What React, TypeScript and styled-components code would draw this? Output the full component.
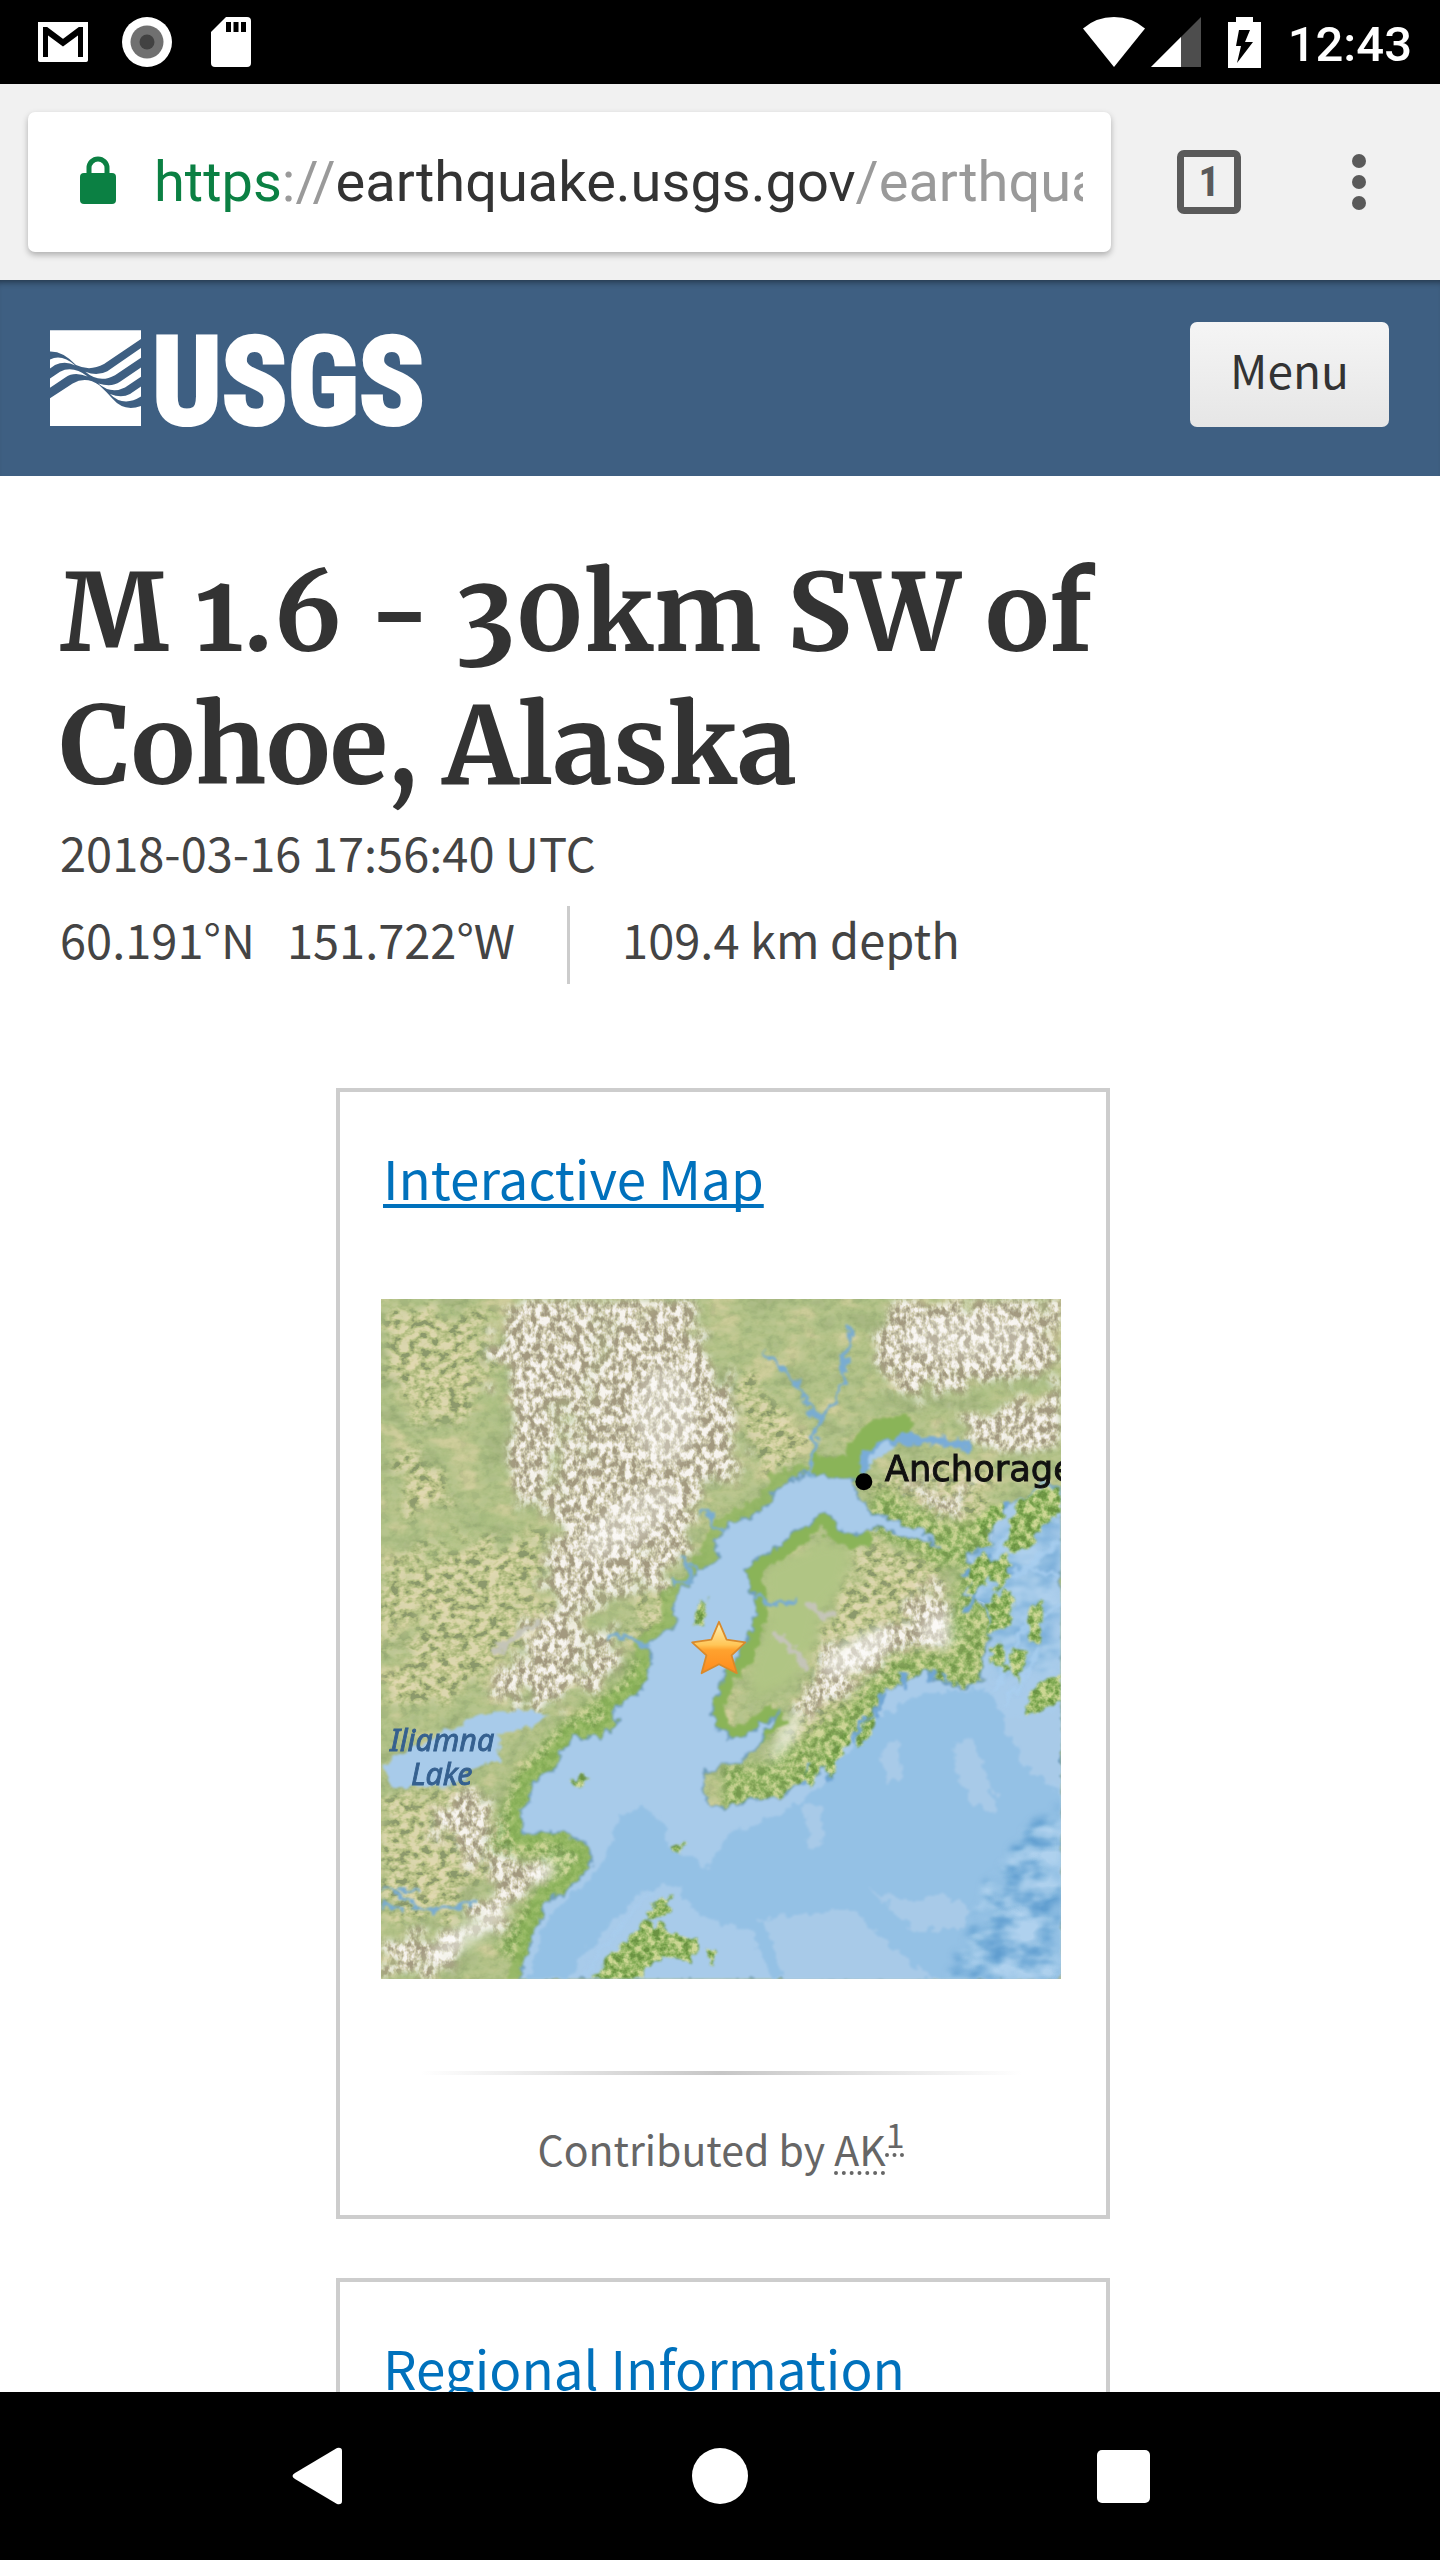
import React from "react";
import styled, { createGlobalStyle } from "styled-components";

const sans = '"Noto Sans CJK SC", "Noto Sans", sans-serif';
const roboto = 'Roboto, "Noto Sans", sans-serif';

const GlobalStyle = createGlobalStyle`
  * { box-sizing: border-box; }
  body { margin: 0; background: #fff; color: #333; font-family: ${sans}; }
  button { border: 0; padding: 0; background: none; font: inherit; color: inherit; cursor: pointer; }
`;

const Screen = styled.div`
  display: flex;
  flex-direction: column;
  height: 100vh;
  overflow: hidden;
`;

/* ---------- system bars ---------- */

const StatusBar = styled.header`
  flex: none;
  display: flex;
  align-items: center;
  justify-content: space-between;
  height: 84px;
  padding: 0 28px 0 38px;
  background: #000;
  color: #fff;
`;

const IconGroup = styled.div<{ $gap: number }>`
  display: flex;
  align-items: center;
  gap: ${p => p.$gap}px;
`;

const Clock = styled.time`
  padding-top: 6px;
  font: 500 49px/58px ${roboto};
`;

const NavBar = styled.nav`
  flex: none;
  display: grid;
  grid-template-columns: repeat(3, 28%);
  justify-content: center;
  height: 168px;
  background: #000;
`;

const NavButton = styled.button`
  display: flex;
  align-items: center;
  justify-content: center;
`;

/* ---------- browser toolbar ---------- */

const Toolbar = styled.div`
  flex: none;
  display: flex;
  align-items: center;
  height: 196px;
  padding: 0 11px 0 28px;
  background: #f1f1f1;
`;

const AddressBar = styled.button`
  flex: 1;
  min-width: 0;
  display: flex;
  align-items: center;
  gap: 38px;
  height: 140px;
  margin-right: 28px;
  padding: 0 28px 0 52px;
  border-radius: 7px;
  background: #fff;
  box-shadow: 0 3px 6px rgba(0, 0, 0, 0.28);
`;

const Url = styled.span`
  flex: 1;
  min-width: 0;
  overflow: hidden;
  white-space: nowrap;
  text-align: left;
  font: 400 56px/66px ${roboto};
  color: #9a9a9a;
`;

const UrlPart = styled.span<{ $color: string }>`
  color: ${p => p.$color};
`;

const ToolButton = styled.button`
  flex: none;
  display: flex;
  align-items: center;
  justify-content: center;
  width: 140px;
  height: 140px;
  margin-right: 10px;
  &:last-child { margin-right: 0; }
`;

const TabCount = styled.span`
  width: 64px;
  height: 64px;
  border: 7px solid #5a5a5a;
  border-radius: 7px;
  font: 700 42px/50px "Roboto Condensed", ${roboto};
  text-align: center;
  color: #5a5a5a;
`;

/* ---------- page ---------- */

const Page = styled.div`
  flex: 1;
  min-height: 0;
  overflow: hidden;
`;

const SiteHeader = styled.div`
  display: flex;
  align-items: flex-start;
  justify-content: space-between;
  height: 196px;
  padding: 42px 51px 0 50px;
  background: #3e5f82;
  box-shadow: inset 0 7px 6px -5px rgba(0, 0, 0, 0.45);
`;

const Logo = styled.a`
  display: flex;
  gap: 11px;
  padding-top: 8px;
  color: #fff;
  text-decoration: none;
`;

const LogoText = styled.span`
  font: 700 122px/106px "Roboto Condensed", "Open Sans Condensed", sans-serif;
  -webkit-text-stroke: 4px #fff;
`;

const MenuButton = styled.button`
  width: 199px;
  height: 105px;
  padding-bottom: 12px;
  border-radius: 7px;
  background: linear-gradient(#f5f5f5, #e6e6e6);
  font-size: 46px;
  color: #333;
`;

const Content = styled.main`
  padding: 71px 54px 0 60px;
`;

const Title = styled.h1`
  margin: 0;
  font: 700 107px/133px Merriweather, "Noto Serif", serif;
  font-variant-numeric: oldstyle-nums;
  font-kerning: none;
  max-width: 1200px;
`;

const EventTime = styled.p`
  margin: 0;
  font-size: 47px;
  line-height: 78px;
  color: #444;
`;

const Facts = styled.div`
  display: flex;
  align-items: flex-start;
  margin: 15px 0 104px;
  font-size: 47px;
  line-height: 66px;
  color: #444;
`;

const Coordinate = styled.span`
  margin-right: 32px;
`;

const Depth = styled.span`
  margin-left: 20px;
  padding: 0 0 12px 52px;
  border-left: 3px solid #ccc;
`;

const Card = styled.section`
  width: 774px;
  max-width: 100%;
  margin: 0 auto 59px;
  padding: 46px 45px 34px 41px;
  border: 4px solid #cdcdcd;
`;

const CardTitle = styled.h2`
  margin: 0 0 83px;
  padding-left: 2px;
  font-size: 53px;
  font-weight: 400;
  line-height: 78px;
`;

const CardLink = styled.a`
  color: #0071bc;
  text-decoration: underline;
  text-decoration-thickness: 4px;
  text-underline-offset: 4px;
  text-decoration-skip-ink: none;
`;

const MapFigure = styled.figure`
  margin: 0;
  svg { display: block; width: 100%; height: auto; }
`;

const Rule = styled.hr`
  height: 4px;
  margin: 92px 39px 40px;
  border: 0;
  background: linear-gradient(to right, transparent, #c6c6c6 50%, transparent);
`;

const Credit = styled.p`
  margin: 0;
  font-size: 41px;
  line-height: 66px;
  text-align: center;
  color: #666;
`;

const Abbr = styled.abbr`
  text-decoration: underline dotted 4px;
  text-underline-offset: 5px;
`;

const Sup = styled.sup`
  position: relative;
  top: -18px;
  vertical-align: baseline;
  font-size: 34px;
  line-height: 0;
  text-decoration: underline dotted 4px;
  text-underline-offset: 5px;
`;

/* ---------- icons ---------- */

const StatusIcons = () => (
  <IconGroup $gap={34}>
    <svg width="50" height="50" viewBox="0 0 50 50" aria-label="Mail">
      <rect y="5" width="50" height="40" rx="4" fill="#fff" />
      <path d="M7.500 40V13.500L25 26.500 42.500 13.500V40" fill="none" stroke="#000" strokeWidth="5" />
      <path d="M5 10L25 25 45 10" fill="none" stroke="#000" strokeWidth="5" />
      <path d="M0 5H50V10H0Z" fill="#fff" />
      <rect y="5" width="5" height="40" rx="2" fill="#fff" />
      <rect x="45" y="5" width="5" height="40" rx="2" fill="#fff" />
    </svg>
    <svg width="50" height="50" viewBox="0 0 50 50" aria-label="Recording">
      <circle cx="25" cy="25" r="25" fill="#fff" />
      <circle cx="25" cy="25" r="16.500" fill="#707070" />
      <circle cx="25" cy="25" r="7.500" fill="#424242" />
    </svg>
    <svg width="50" height="50" viewBox="0 0 50 50" aria-label="SD card">
      <path d="M20 0H41Q45 0 45 4V46Q45 50 41 50H9Q5 50 5 46V15Z" fill="#fff" />
      <path d="M20 5h5v10h-5zM27.500 5h5v10h-5zM35 5h5v10h-5z" fill="#000" />
    </svg>
  </IconGroup>
);

const SignalIcons = () => (
  <>
    <IconGroup $gap={6}>
      <svg width="62" height="50" viewBox="0 0 62 50" aria-label="Wi-Fi">
        <path d="M0 11.500Q13 0 31 0T62 11.500L31 50Z" fill="#fff" />
      </svg>
      <svg width="50" height="50" viewBox="0 0 50 50" aria-label="Signal">
        <path d="M50 0V50H0Z" fill="#4d4d4d" />
        <path d="M30 20V50H0Z" fill="#fff" />
      </svg>
    </IconGroup>
    <svg width="33" height="51" viewBox="0 0 33 51" aria-label="Charging">
      <path d="M8 0H25V5H33V51H0V5H8Z" fill="#fff" />
      <path d="M11 13H22L17 25H25L9 46 13 29H8Z" fill="#000" />
    </svg>
  </>
);

const Lock = () => (
  <svg width="36" height="52" viewBox="0 0 36 52" aria-label="Secure">
    <path d="M9 22V12a9 9 0 0 1 18 0V22" fill="none" stroke="#0b8043" strokeWidth="5" />
    <rect y="17" width="36" height="31" rx="4" fill="#0b8043" />
  </svg>
);

const Waves = () => (
  <svg width="91" height="96" viewBox="30 43 273 287" preserveAspectRatio="none" aria-hidden="true">
    <g fill="#fff">
      <path d="M30 44H303V70L192 145Q150 168 108 148Q70 106 30 107Z" />
      <path d="M30 158L45 148Q75 133 106 149Q65 113 30 131Z" />
      <path d="M136 168Q172 182 202 166L303 97V126L225 178Q178 204 136 168Z" />
      <path d="M30 188L60 168Q98 148 143 182Q103 166 77 184L30 216Z" />
      <path d="M175 203Q215 216 240 198L303 155V183L255 215Q213 236 175 203Z" />
      <path d="M210 234Q245 248 270 234L303 212V242Q250 275 210 234Z" />
      <path d="M30 247L98 203Q138 180 178 208Q202 230 217 248Q252 289 303 270V330H30Z" />
    </g>
  </svg>
);

/* ---------- terrain map ---------- */

const WATER =
  "M1085 425L1040 418 1000 415 985 405 960 420 920 435 895 470 880 495 850 510 810 520 785 545 770 570 785 605 740 625 715 660 680 690 680 720 690 740 665 765 640 780 618 800 632 830 620 870 600 905 555 925 548 970 520 1000 460 1000 430 1035 412 1075 365 1100 355 1140 340 1165 345 1215 385 1205 440 1215 485 1240 500 1272 470 1320 430 1350 395 1365 380 1410 365 1440 355 1480 335 1545H1550V440L1500 430 1470 470 1420 480 1395 520 1390 570 1330 590 1365 620 1330 680 1375 700 1390 760 1370 820 1370 870 1330 892 1280 880 1240 850 1200 880 1150 895 1125 955 1080 995 1040 1045 1000 1085 950 1105 920 1140 850 1140 795 1165 740 1125 750 1080 800 1060 860 1035 885 990 915 945 880 970 850 995 805 1000 765 970 770 920 785 870 815 830 840 790 860 740 860 690 843 625 865 600 900 585 950 545 1000 505 1025 500 1050 540 1090 548 1130 530 1190 548 1245 560 1272 575 1240 540 1165 515 1120 490 1085 455Z";
const INLET_WEST = "M985 405L960 420 920 435 895 470 880 495 850 510 810 520 785 545 770 570 785 605 740 625 715 660 680 690 680 720 690 740 665 765 640 780 618 800 632 830 620 870 600 905 555 925 548 970 520 1000 460 1000 430 1035 412 1075 365 1100 355 1140 340 1165 345 1215 385 1205 440 1215 485 1240 500 1272 470 1320 430 1350 395 1365 380 1410 365 1440 355 1480 335 1545";
const INLET_EAST = "M915 945L880 970 850 995 805 1000 765 970 770 920 785 870 815 830 840 790 860 740 860 690 843 625 865 600 900 585 950 545 1000 505 1025 500 1050 540 1090 548 1110 540";

const SNOW_RANGES = [
  "M300 20H725L740 130 820 220 810 320 840 400 730 440 725 520 700 600 650 660 560 690 470 730 400 830 330 800 430 690 390 600 430 500 330 480 300 400 330 300 280 150Z",
  "M1160 20H1546V205L1380 205 1180 245 1140 150Z",
  "M1290 285L1546 225V345L1450 370 1350 335Z",
  "M1180 435L1330 440 1330 520 1260 500Z",
  "M420 760L540 760 590 830 520 880 400 920 300 920 260 890 320 830Z",
  "M1230 670L1300 680 1310 780 1240 800 1150 830 1030 930 970 960 960 900 1020 840 1040 780 1140 770Z",
  "M130 1170L240 1110 290 1200 320 1260 440 1265 400 1320 330 1370 250 1440 130 1530 25 1541V1460L210 1420 290 1340 200 1260Z",
];
const HILLS = [
  "M25 60L270 40 280 160 200 300 60 260Z",
  "M60 340L160 400 190 480 80 500Z",
  "M180 560L400 560 390 660 120 740 60 720 25 850V600Z",
  "M160 680L430 690 380 770 280 830 150 940 25 920 60 840Z",
  "M820 170L960 300 970 360 860 400Z",
  "M1100 560L1250 580 1300 700 1370 740 1360 860 1200 850 1080 960 930 1100 890 1080 940 960 1000 840 1020 760 1080 640Z",
  "M1090 440L1330 380 1400 420 1360 560 1240 530Z",
  "M25 1130L240 1100 300 1260 180 1400 25 1400Z",
  "M600 700L670 660 650 760 560 760Z",
];
const ISLANDS = [
  "M1546 860L1500 880 1465 930 1470 955 1520 930 1546 915Z",
  "M1440 490L1500 440 1546 440 1546 500 1500 530 1470 580 1430 590 1425 560Z",
  "M1340 620L1375 590 1400 620 1370 670 1340 680Z",
  "M1380 700L1420 665 1445 700 1420 760 1385 770Z",
  "M1385 800L1410 790 1430 850 1395 840Z",
  "M1480 720L1505 690 1495 790 1470 790Z",
  "M1380 620L1425 590 1430 640 1400 670Z",
  "M1440 800L1470 820 1450 870 1430 850Z",
  "M1350 520L1410 470 1420 510 1370 560Z",
  "M1010 1050L1080 980 1060 1040 1025 1090Z",
  "M1090 990L1130 950 1115 1010 1090 1030Z",
  "M960 1090L1010 1050 990 1110Z",
  "M455 1095L475 1085 495 1100 465 1112Z",
  "M740 690L755 690 740 745 720 752Z",
  "M625 1380L675 1355 660 1400 620 1410Z",
  "M500 1541L530 1490 590 1440 620 1410 690 1440 740 1460 720 1500 650 1490 600 1541Z",
  "M670 1245L700 1240 700 1258 680 1255Z",
  "M755 1480L770 1475 765 1510 757 1505Z",
];
const RIVERS = [
  "M985 415L990 370 1000 345 990 320 1010 290 1045 240 1060 210 1065 150 1078 100 1065 75",
  "M1008 290L985 270 975 240 950 200 920 170 880 140",
  "M785 545L765 520 755 495 735 505",
  "M860 680L900 705 940 700 955 685",
  "M680 655L720 655 705 605 740 630",
  "M630 795L600 790 570 770 530 780",
  "M25 1335L80 1360 110 1390 160 1385 240 1370",
  "M25 1370L80 1390M110 1350L60 1340",
];
const STAR = "M781 742L798 782 840 788 809 817 821 857 781 837 742 857 753 817 721 788 764 782Z";

const paths = (list: string[], extra: React.SVGProps<SVGPathElement> = {}) =>
  list.map(d => <path key={d} d={d} {...extra} />);

const Terrain = ({ id, freq, seed, rgb, k }: { id: string; freq: string; seed: number; rgb: string[]; k: number }) => (
  <filter id={id} x="0" y="0" width="100%" height="100%" colorInterpolationFilters="sRGB">
    <feTurbulence type="fractalNoise" baseFrequency={freq} numOctaves={3} seed={seed} />
    <feColorMatrix values={`${k} 0 0 0 ${(1 - k) / 2} ${k} 0 0 0 ${(1 - k) / 2} ${k} 0 0 0 ${(1 - k) / 2} 0 0 0 0 1`} />
    <feComponentTransfer>
      <feFuncR type="table" tableValues={rgb[0]} />
      <feFuncG type="table" tableValues={rgb[1]} />
      <feFuncB type="table" tableValues={rgb[2]} />
    </feComponentTransfer>
    <feGaussianBlur stdDeviation="1.5" />
  </filter>
);

const full = { x: 25, y: 20, width: 1521, height: 1521 };

const TerrainMap = () => (
  <svg viewBox="25 20 1521 1521" role="img" aria-label="Map of the epicenter in Cook Inlet, Alaska">
    <defs>
      <Terrain id="plains" freq="0.012 0.022" seed={4} k={2.2} rgb={[".62 .67 .70 .80", ".70 .75 .76 .80", ".48 .52 .53 .60"]} />
      <Terrain id="hills" freq="0.045 0.06" seed={9} k={2.6} rgb={[".52 .68 .76 .87 .90", ".57 .72 .78 .84 .86", ".40 .48 .56 .66 .72"]} />
      <Terrain id="peaks" freq="0.07 0.05" seed={15} k={2.9} rgb={[".64 .71 .82 .91 .97", ".60 .69 .80 .89 .96", ".50 .60 .68 .85 .94"]} />
      <Terrain id="coastal" freq="0.06" seed={21} k={2.6} rgb={[".42 .52 .66 .80", ".58 .68 .76 .84", ".26 .34 .46 .58"]} />
      <Terrain id="sea" freq="0.012 0.02" seed={2} k={2.4} rgb={[".36 .46 .60 .70", ".61 .68 .77 .83", ".81 .85 .90 .94"]} />
      <filter id="soft" x="-20%" y="-20%" width="140%" height="140%"><feGaussianBlur stdDeviation="12" /></filter>
      <filter id="rough" filterUnits="userSpaceOnUse" {...full}>
        <feTurbulence type="fractalNoise" baseFrequency="0.045" numOctaves={2} seed={7} result="n" />
        <feDisplacementMap in="SourceGraphic" in2="n" scale="34" xChannelSelector="R" yChannelSelector="G" result="d" />
        <feGaussianBlur in="d" stdDeviation="1.8" />
      </filter>
      <filter id="ragged" filterUnits="userSpaceOnUse" {...full}>
        <feTurbulence type="fractalNoise" baseFrequency="0.025" numOctaves={3} seed={3} result="n" />
        <feDisplacementMap in="SourceGraphic" in2="n" scale="130" xChannelSelector="R" yChannelSelector="G" result="d" />
        <feGaussianBlur in="d" stdDeviation="8" />
      </filter>
      <mask id="snowMask" maskUnits="userSpaceOnUse" {...full}><g filter="url(#ragged)">{paths(SNOW_RANGES, { fill: "#fff" })}</g></mask>
      <mask id="hillMask" maskUnits="userSpaceOnUse" {...full}><g filter="url(#ragged)">{paths(HILLS, { fill: "#ccc" })}</g></mask>
      <mask id="coastMask" maskUnits="userSpaceOnUse" {...full}>
        <g filter="url(#soft)" fill="none" stroke="#fff" strokeWidth="90">
          <path d="M632 830L600 905 460 1000 365 1100 320 1220 440 1240 470 1320 380 1400 320 1500" />
          <path d="M1120 480L1280 570 1400 560 1350 720 1350 860 1200 860 1080 980 900 1110 790 1110" strokeWidth="100" />
        </g>
      </mask>
      <mask id="islandMask" maskUnits="userSpaceOnUse" {...full}><g filter="url(#rough)">{paths(ISLANDS, { fill: "#fff" })}</g></mask>
      <mask id="deepMask" maskUnits="userSpaceOnUse" {...full}>
        <g filter="url(#ragged)">
          <path d="M1546 1150L1450 1220 1400 1330 1360 1400 1300 1546H1546Z" fill="#fff" />
          <path d="M1330 600L1546 440V850L1400 860Z" fill="#999" />
        </g>
      </mask>
      <clipPath id="waterClip"><path d={WATER} /></clipPath>
      <linearGradient id="starFill" x1="0" y1="0" x2="0" y2="1">
        <stop offset="0" stopColor="#fff2b8" />
        <stop offset=".45" stopColor="#ffc657" />
        <stop offset=".55" stopColor="#ffa22e" />
        <stop offset="1" stopColor="#ff8a1c" />
      </linearGradient>
    </defs>

    <rect {...full} filter="url(#plains)" />
    <g opacity=".16"><rect {...full} filter="url(#hills)" /></g>
    <g mask="url(#hillMask)"><rect {...full} filter="url(#hills)" /></g>
    <g mask="url(#snowMask)"><rect {...full} filter="url(#peaks)" /></g>
    <g filter="url(#soft)" fill="#fff">
      <ellipse cx="660" cy="280" rx="70" ry="110" opacity=".35" />
      <ellipse cx="580" cy="520" rx="130" ry="50" opacity=".35" transform="rotate(-35 580 520)" />
      <ellipse cx="1090" cy="810" rx="90" ry="35" opacity=".55" transform="rotate(-30 1090 810)" />
      <ellipse cx="930" cy="1010" rx="20" ry="70" opacity=".6" transform="rotate(25 930 1010)" />
      <ellipse cx="1280" cy="760" rx="50" ry="40" opacity=".5" />
      <ellipse cx="1340" cy="110" rx="150" ry="50" opacity=".25" />
      <ellipse cx="410" cy="1290" rx="60" ry="22" opacity=".5" transform="rotate(-30 410 1290)" />
      <ellipse cx="220" cy="1440" rx="110" ry="24" opacity=".5" transform="rotate(-35 220 1440)" />
    </g>
    <g filter="url(#ragged)" fill="none" stroke="#a9bf80" strokeWidth="16" opacity=".75">
      <path d="M25 660L140 600 230 530 380 470 420 400 430 250M280 20L240 180 290 300" />
      <path d="M480 380L490 200 540 60M440 730L620 620M560 690L470 850" strokeWidth="9" />
      <path d="M1140 250L1380 210 1546 215" />
    </g>
    <path d="M880 620L1020 560 1080 580 1060 660 1010 720 990 800 940 880 860 920 850 840 890 740Z" fill="#b0c584" filter="url(#soft)" />
    <path d="M900 770Q950 790 980 850M985 710L1030 730M280 810L370 745" stroke="#c4c4b8" strokeWidth="14" strokeLinecap="round" fill="none" filter="url(#rough)" />
    <g mask="url(#coastMask)" opacity=".8"><rect {...full} filter="url(#coastal)" /></g>

    <g fill="none" stroke="#8ab458" strokeWidth="56" strokeLinejoin="round" filter="url(#rough)">
      <path d={INLET_WEST} opacity=".7" />
      <path d={INLET_EAST} />
      <path d="M990 400H1085L1095 350 1140 315 1210 305" />
    </g>

    <g filter="url(#rough)">
      <path d={WATER} fill="#a8cbea" stroke="#6f9fc0" strokeWidth="4" />
      <path d="M60 1040L130 1010 210 970 250 945 340 940 400 950 350 980 290 990 290 1050 220 1075 180 1110 50 1112 30 1070Z" fill="#a8cbea" />
      {paths(RIVERS, { fill: "none", stroke: "#79acd0", strokeWidth: 9 })}
      <path d="M1105 410Q1105 350 1170 338T1340 350" fill="none" stroke="#79acd8" strokeWidth="18" />
      <path d="M1115 395Q1125 360 1170 345" fill="none" stroke="#a8cbea" strokeWidth="16" />
    </g>
    <g clipPath="url(#waterClip)">
      <g filter="url(#rough)">
        <path d="M560 1170L610 1160 660 1190 660 1240 760 1290 800 1220 900 1180 1010 1110 1120 960 1250 900 1380 890 1420 960 1460 1060 1546 1120V1541H900L860 1440 740 1400 680 1330 610 1340 520 1440 440 1541H350L400 1400 520 1290Z" fill="#94c1e5" />
        <g fill="#a8cae8">
          <path d="M1310 1010L1350 1000 1370 1060 1400 1140 1400 1170 1350 1150 1310 1080Z" />
          <path d="M1140 1030L1180 1010 1190 1080 1160 1110Z" />
          <path d="M970 1140L1010 1160 1015 1240 985 1250Z" />
          <path d="M870 1410L1080 1380 1130 1440 1280 1560H930L900 1460Z" />
          <path d="M1120 1340L1200 1370 1280 1350 1340 1380 1330 1430 1220 1430 1180 1400Z" />
          <path d="M1410 960L1546 940V1110L1480 1080Z" />
        </g>
      </g>
      <g mask="url(#deepMask)"><rect {...full} filter="url(#sea)" opacity=".9" /></g>
      <g fill="none" stroke="#a9cff0" strokeWidth="10" opacity=".8" filter="url(#rough)">
        <path d="M1480 460L1400 600M1546 560L1440 640 1360 660M1546 700L1460 760 1400 900M1440 620L1546 640M1500 800L1420 930" />
        <path d="M630 1340L500 1500 480 1541" opacity=".6" />
      </g>
    </g>
    <path d="M1130 960L1150 900M1080 1010L1110 950M1020 1100L1050 1020M1200 890L1195 850M1290 880L1280 850M1250 880L1260 850M970 1110L985 1060M1330 720L1370 650M1380 540L1430 470M1330 640L1390 590" stroke="#6fa5d4" strokeWidth="9" filter="url(#rough)" />
    <g mask="url(#islandMask)"><rect {...full} filter="url(#coastal)" /></g>

    <circle cx="1105" cy="429" r="19" fill="#000" />
    <text x="1152" y="426" fontFamily='"DejaVu Sans", sans-serif' fontSize="79" fill="#111" stroke="#111" strokeWidth="2">Anchorage</text>
    <g fontFamily='"Noto Sans", sans-serif' fontSize="68" fontStyle="italic" fill="#35608f" stroke="#35608f" strokeWidth="2">
      <text x="45" y="1030">Iliamna</text>
      <text x="92" y="1107">Lake</text>
    </g>
    <path d={STAR} fill="url(#starFill)" stroke="#d98a2b" strokeWidth="4" strokeLinejoin="round" />
  </svg>
);

export default function App() {
  return (
    <Screen>
      <GlobalStyle />
      <StatusBar>
        <StatusIcons />
        <IconGroup $gap={27}>
          <SignalIcons />
          <Clock>12:43</Clock>
        </IconGroup>
      </StatusBar>

      <Toolbar>
        <AddressBar aria-label="Address bar">
          <Lock />
          <Url>
            <UrlPart $color="#0b8043">https</UrlPart>://<UrlPart $color="#333">earthquake.usgs.gov</UrlPart>/earthquakes
          </Url>
        </AddressBar>
        <ToolButton aria-label="Open tabs"><TabCount>1</TabCount></ToolButton>
        <ToolButton aria-label="More options">
          <svg width="14" height="56" viewBox="0 0 14 56" fill="#5a5a5a" aria-hidden="true">
            <circle cx="7" cy="7" r="7" />
            <circle cx="7" cy="28" r="7" />
            <circle cx="7" cy="49" r="7" />
          </svg>
        </ToolButton>
      </Toolbar>

      <Page>
        <SiteHeader>
          <Logo href="#">
            <Waves />
            <LogoText>USGS</LogoText>
          </Logo>
          <MenuButton>Menu</MenuButton>
        </SiteHeader>
        <Content>
          <Title>M 1.6 - 30km SW of Cohoe, Alaska</Title>
          <EventTime>2018-03-16 17:56:40 UTC</EventTime>
          <Facts>
            <Coordinate>60.191°N</Coordinate>
            <Coordinate>151.722°W</Coordinate>
            <Depth>109.4 km depth</Depth>
          </Facts>
          <Card>
            <CardTitle><CardLink href="#">Interactive Map</CardLink></CardTitle>
            <MapFigure><TerrainMap /></MapFigure>
            <Rule />
            <Credit>Contributed by <Abbr>AK</Abbr><Sup>1</Sup></Credit>
          </Card>
          <Card>
            <CardTitle><CardLink href="#">Regional Information</CardLink></CardTitle>
          </Card>
        </Content>
      </Page>

      <NavBar aria-label="System navigation">
        <NavButton aria-label="Back">
          <svg width="50" height="58" viewBox="0 0 50 58" aria-hidden="true">
            <path d="M45 1Q50 0 50 4V54Q50 58 45 57L3 32Q-2 29 3 26Z" fill="#fff" />
          </svg>
        </NavButton>
        <NavButton aria-label="Home">
          <svg width="56" height="56" viewBox="0 0 56 56" aria-hidden="true"><circle cx="28" cy="28" r="28" fill="#fff" /></svg>
        </NavButton>
        <NavButton aria-label="Recent apps">
          <svg width="53" height="53" viewBox="0 0 53 53" aria-hidden="true"><rect width="53" height="53" rx="5" fill="#fff" /></svg>
        </NavButton>
      </NavBar>
    </Screen>
  );
}
